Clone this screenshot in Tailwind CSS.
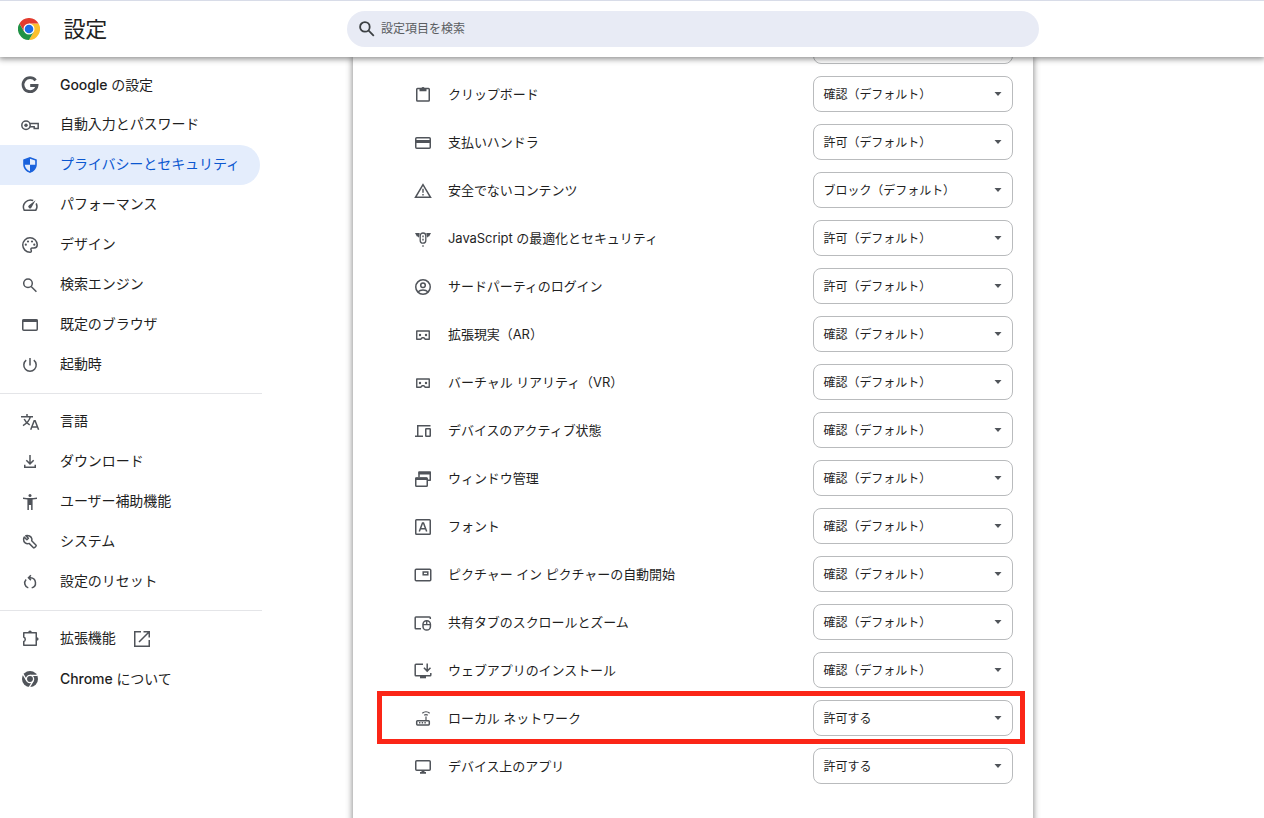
<!DOCTYPE html>
<html lang="ja">
<head>
<meta charset="utf-8">
<title>設定</title>
<script src="https://cdn.jsdelivr.net/npm/@tailwindcss/browser@4"></script>
</head>
<body class="bg-white">
<div class="relative flex h-[818px] w-[1264px] flex-col overflow-hidden bg-white font-['Inter','Noto_Sans_CJK_JP',sans-serif] text-[#1f1f1f]">
  <header class="relative z-10 flex h-[57px] shrink-0 items-center border-t border-[#d8dce8] bg-white shadow-[0_1px_6px_1px_rgba(0,0,0,0.45)]">
    <div class="flex w-[347px] items-center pl-[18px]">
      <svg class="size-[22px]" viewBox="0 0 22 22">
        <circle cx="11" cy="11" r="11" fill="#fff"/>
        <path d="M11 5.5 H20.53 A11 11 0 0 1 11 22 L15.76 13.75 Z" fill="#fbc02d"/>
        <path d="M1.47 5.5 A11 11 0 0 0 11 22 L15.76 13.75 L11 11 L6.24 13.75 Z" fill="#1f9246"/>
        <path d="M1.47 5.5 L6.24 13.75 L11 11 L11 5.5 H20.53 A11 11 0 0 0 1.47 5.5 Z" fill="#e33b2e"/>
        <circle cx="11" cy="11" r="5.5" fill="#fff"/>
        <circle cx="11" cy="11" r="4.3" fill="#1a6be6"/>
      </svg>
      <h1 class="ml-[23.5px] text-[22px] leading-[32px] tracking-[-0.3px]">設定</h1>
    </div>
    <div class="flex h-9 w-[692px] items-center rounded-full bg-[#e8ebf5] pl-[10px] text-[12px] text-[#5a5d61]">
      <svg class="mr-1 size-5 text-[#3c4043]" viewBox="0 0 20 20" fill="none" stroke="currentColor" stroke-width="1.8"><circle cx="7.9" cy="7.9" r="4.8"/><path d="M11.4 11.4 L16.8 16.8"/></svg>
      <span>設定項目を検索</span>
    </div>
  </header>
  <div class="flex min-h-0 flex-1">
    <nav id="nav" class="w-[262px] shrink-0 pt-2 text-[14px]"></nav>
    <main class="ml-[91px] w-[680px]">
      <div class="flow-root h-[780px] shadow-[0_0_6px_1px_rgba(0,0,0,0.42)]">
        <div id="rows" class="-mt-[35px] flex flex-col pr-5 pl-[60px] text-[13px]"></div>
      </div>
    </main>
  </div>
  <div class="absolute top-[691px] left-[377px] z-20 h-[53px] w-[648px] border-5 border-[#fb2617]"></div>
</div>
<script>
const S = 'fill="none" stroke="currentColor" stroke-width="1.5"';
const F = 'fill="currentColor"';
const goggles = `<g ${S}><path d="M3.75 6h12.5v8.3h-4L10.900 12.700H9.100l-1.350 1.600h-4z" stroke-linejoin="round" stroke-width="1.4"/></g><g ${F}><circle cx="7" cy="10" r="1.2"/><circle cx="13" cy="10" r="1.2"/></g>`;
const icons = {
  google: `<path d="M15.6 5.4A7 7 0 1 0 17 10.500H10.2" fill="none" stroke="currentColor" stroke-width="2.8"/>`,
  key: `<g ${S}><circle cx="6" cy="10.3" r="4.2"/><path d="M9.7 8.6h8.5v4.9h-4v-1.7H9.7" /></g><circle cx="6" cy="10.3" r="1.7" ${F}/>`,
  shield: `<path fill-rule="evenodd" d="M10 2l6.8 2.5v5c0 3.9-2.8 7.2-6.8 8.4-4-1.2-6.8-4.5-6.8-8.4v-5zM10 3.7v6.1h5.2V5.6zM10 9.8H4.8c.3 3 2.300 5.400 5.200 6.400z" ${F}/>`,
  speed: `<path d="M13.2 5.500A7.100 7.100 0 0 0 4.200 15.250H15.800A7.100 7.100 0 0 0 16.200 8.300" ${S}/><path d="M15.600 5.300l-4 7a1.700 1.700 0 1 1-2.600-2z" ${F}/>`,
  palette: `<path d="M10 17.250a7.250 7.250 0 1 1 7.250-7.400c0 2-1.500 3.150-3.300 3.150h-1.700c-1.200 0-1.700 1-1.200 1.900.7 1.200.3 2.350-1.050 2.350z" ${S}/><g ${F}><circle cx="5.800" cy="9.700" r="1.100"/><circle cx="8" cy="6.500" r="1.100"/><circle cx="12" cy="6.500" r="1.100"/><circle cx="14.300" cy="9.700" r="1.100"/></g>`,
  search: `<g ${S}><circle cx="8" cy="8.300" r="4.300"/><path d="M11.200 11.500l5.200 5.200"/></g>`,
  browser: `<rect x="2.750" y="4.750" width="14.500" height="10.500" rx="1" ${S}/><path d="M2.500 4.500h15v2.500h-15z" ${F}/>`,
  power: `<path d="M10 3v7.500M6.200 5.200a6.200 6.200 0 1 0 7.600 0" ${S}/>`,
  translate: `<g ${S}><path d="M1 4.700h12M7 2v2.700M10.400 4.700c-.8 3.500-3.600 6.700-7.400 9M4.200 7c1.100 2.600 3 4.500 5.500 5.900"/><path d="M10.700 17.800l3.500-9h.9l3.500 9M12 15h5.300"/></g>`,
  download: `<path d="M10 3v8.500M6.300 8.200l3.700 3.700 3.700-3.700M4.750 12.700v2.500h10.500v-2.500" ${S}/>`,
  access: `<g ${F}><circle cx="10" cy="3.400" r="1.500"/><path d="M3 5.500c4.700.7 9.300.7 14 0V7c-1.500.2-3 .4-4.400.5V18h-1.500v-5H8.900v5H7.400V7.500C6 7.400 4.500 7.200 3 7z"/></g>`,
  wrench: `<path d="M4.200 5.100l2.700 2.600 1.500-1.500-2.600-2.500c2.500-.8 5.400.5 6 2.900.2.800.1 1.500-.1 2.200l4.400 4.400c.7.700-1.900 3.300-2.600 2.600L9.100 11.400c-2.900 1-5.700-1.200-5.500-4.200 0-.8.200-1.500.6-2.100z" fill="none" stroke="currentColor" stroke-width="1.500" stroke-linejoin="round"/>`,
  reset: `<path d="M11.700 15.900A5.200 5.200 0 0 0 10.500 5.700H8.500M8.300 15.900A5.200 5.200 0 0 1 6.100 7.400M10.900 3.300L8.500 5.700l2.400 2.400" ${S}/>`,
  extension: `<path d="M3.750 3.750h12.500v12.500H3.750v-3.800c1.800-.3 2.200-3.500 0-4.500z" stroke-linejoin="round" ${S}/><path d="M8.200 3.300a1.800 1.800 0 0 1 3.600 0zM16.800 8.200a1.800 1.800 0 0 1 0 3.600z" ${F}/>`,
  open: `<path d="M9 2.750H2.750v14.500h14.500V11M11.500 2.750h5.750V8.500M17 3L7 13" ${S}/>`,
  chrome: `<circle cx="10" cy="10" r="8" ${F}/><circle cx="10" cy="10" r="3.600" fill="none" stroke="#fff" stroke-width="1.300"/><path d="M10 6.400h7.600M6.900 11.800L3 5.200M13.100 11.800L9.300 18.300" stroke="#fff" stroke-width="1.300"/>`,
  clipboard: `<rect x="3.750" y="3.550" width="12.500" height="12.400" rx=".8" ${S}/><path d="M6.500 3h2a1.600 1.600 0 0 1 3 0h2v3.200h-7z" ${F}/>`,
  card: `<rect x="2.750" y="4.750" width="14.500" height="10.500" rx="1" ${S}/><path d="M2.500 7h15v3h-15z" ${F}/>`,
  warning: `<path d="M10 3.600L2.500 16.250h15z" ${S}/><path d="M9.300 7.800h1.400v4H9.300zM9.300 13h1.400v1.400H9.300z" ${F}/>`,
  script: `<path d="M2 3.900h4.700L6 8.700 4.800 7.500h-.9zM18 3.900h-4.700l.7 4.800 1.200-1.200h.9zM9.300 16.300h1.400v1.400H9.300z" ${F}/><rect x="7.200" y="4" width="5.600" height="10.200" rx="2.800" fill="#fff" stroke="currentColor" stroke-width="1.300"/><path d="M9.300 6.500h1.400v1.700H9.300zM9.300 9.700h1.400v1.700H9.300z" ${F}/>`,
  account: `<g ${S}><circle cx="10" cy="10" r="7.250"/><circle cx="10" cy="8.300" r="2.300"/><path d="M4.800 15c2.800-2.600 7.600-2.600 10.400 0"/></g>`,
  goggles,
  devices: `<path d="M17.500 4.750H4.750V15M2 15.250h8" ${S}/><rect x="12.750" y="7.750" width="4.500" height="7.500" rx=".5" ${S}/>`,
  windows: `<path d="M6 8V3.300h11.250V11.250H14" stroke-linejoin="round" ${S}/><path d="M5.500 2.500h12.200v3H5.500zM2.300 8.500h12v2.500h-12z" ${F}/><rect x="2.750" y="8.950" width="11.500" height="8.300" rx=".8" ${S}/>`,
  font: `<rect x="2.750" y="2.750" width="14.500" height="14.500" rx=".8" ${S}/><path d="M6.300 14.400L9.500 5.900h1l3.200 8.500M7.600 11.700h4.800" ${S}/>`,
  pip: `<rect x="2.250" y="4.250" width="15.500" height="11.600" rx="1" ${S}/><rect x="10.200" y="7" width="4.600" height="2.800" ${S}/>`,
  mouse: `<path d="M8 15.750H3c-.5 0-.8-.3-.8-.8V4.700c0-.5.3-.8.8-.8h13.500c.5 0 .8.300.8.800V6" ${S}/><rect x="10" y="7.700" width="7.400" height="9.400" rx="3.600" ${S}/><path d="M10 11.700h7.400M13.700 8v3.700" stroke="currentColor" stroke-width="1.300"/>`,
  install: `<path d="M10 3.250H3c-.5 0-.8.300-.8.800v9.900c0 .5.300.8.800.8h14c.5 0 .8-.3.8-.8V12M14.200 2.500v7.300M10.900 6.800l3.300 3.300 3.300-3.300" ${S}/><path d="M7 15h6v2.300H7z" ${F}/>`,
  router: `<rect x="3.700" y="11.700" width="12.600" height="4.200" rx=".8" ${S}/><path d="M13 7.500V11.500M9.300 4.200a5.500 5.500 0 0 1 7.400 0M11.200 6.300a3 3 0 0 1 3.600 0" fill="none" stroke="currentColor" stroke-width="1.200"/><path d="M6 13h1.400v1.500H6zM8.700 13h1.400v1.500H8.700zM11.400 13h1.400v1.500h-1.400z" ${F}/>`,
  monitor: `<rect x="2.750" y="3.750" width="14.500" height="9.500" rx="1" ${S}/><path d="M8.500 13.500h3V15H13v1.700H7V15h1.500z" ${F}/>`
};
const svg = n => `<svg class="size-5 shrink-0" viewBox="0 0 20 20">${icons[n]}</svg>`;
const latin = t => t.replace(/^(Google|Chrome)/, '<span class="font-medium">$1</span>');
const nav = [
  ['google','Google の設定'],['key','自動入力とパスワード'],['shield','プライバシーとセキュリティ'],['speed','パフォーマンス'],
  ['palette','デザイン'],['search','検索エンジン'],['browser','既定のブラウザ'],['power','起動時'],null,
  ['translate','言語'],['download','ダウンロード'],['access','ユーザー補助機能'],['wrench','システム'],['reset','設定のリセット'],null,
  ['extension','拡張機能'],['chrome','Chrome について']
];
document.getElementById('nav').innerHTML = nav.map(i => {
  if (!i) return '<hr class="my-2 border-t border-[#e4e5e8]">';
  const color = i[0] === 'shield' ? 'bg-[#e4edfc] text-[#1a62dc]' : 'text-[#50545a]';
  const text = i[0] === 'shield' ? 'text-[#0b57d0]' : 'text-[#1f1f1f]';
  const lift = /^[A-Z]/.test(i[1]) ? '' : 'pb-0.5';
  const extra = i[0] === 'extension' ? '<span class="ml-4">' + svg('open') + '</span>' : '';
  return `<a class="flex h-10 w-[260px] items-center rounded-r-full pl-5 ${color}">${svg(i[0])}<span class="ml-5 whitespace-nowrap leading-5 tracking-[-0.07px] ${text} ${lift}">${latin(i[1])}</span>${extra}</a>`;
}).join('');
const A = '確認（デフォルト）', B = '許可（デフォルト）';
const rows = [
  ['clipboard','',A],['clipboard','クリップボード',A],['card','支払いハンドラ',B],['warning','安全でないコンテンツ','ブロック（デフォルト）'],
  ['script','JavaScript の最適化とセキュリティ',B],['account','サードパーティのログイン',B],['goggles','拡張現実（AR）',A],
  ['goggles','バーチャル リアリティ（VR）',A],['devices','デバイスのアクティブ状態',A],['windows','ウィンドウ管理',A],['font','フォント',A],
  ['pip','ピクチャー イン ピクチャーの自動開始',A],['mouse','共有タブのスクロールとズーム',A],['install','ウェブアプリのインストール',A],
  ['router','ローカル ネットワーク','許可する'],['monitor','デバイス上のアプリ','許可する']
];
document.getElementById('rows').innerHTML = rows.map(r => `
  <div class="flex h-12 items-center">
    <span class="pt-0.5 text-[#50545a]">${svg(r[0])}</span>
    <span class="ml-[15px] flex-1 leading-5 tracking-[-0.06px] whitespace-nowrap">${r[1]}</span>
    <div class="flex h-9 w-[200px] items-center justify-between rounded-lg border border-[#b9bbbd] pr-[10px] pl-[9.5px] text-[12px]">
      <span class="pt-0.5 leading-[18px] tracking-[-0.04px]">${r[2]}</span>
      <svg class="h-1 w-2 text-[#50545a]" viewBox="0 0 8 4"><path d="M.5 0h7L4 4z" fill="currentColor"/></svg>
    </div>
  </div>`).join('');
</script>
</body>
</html>
